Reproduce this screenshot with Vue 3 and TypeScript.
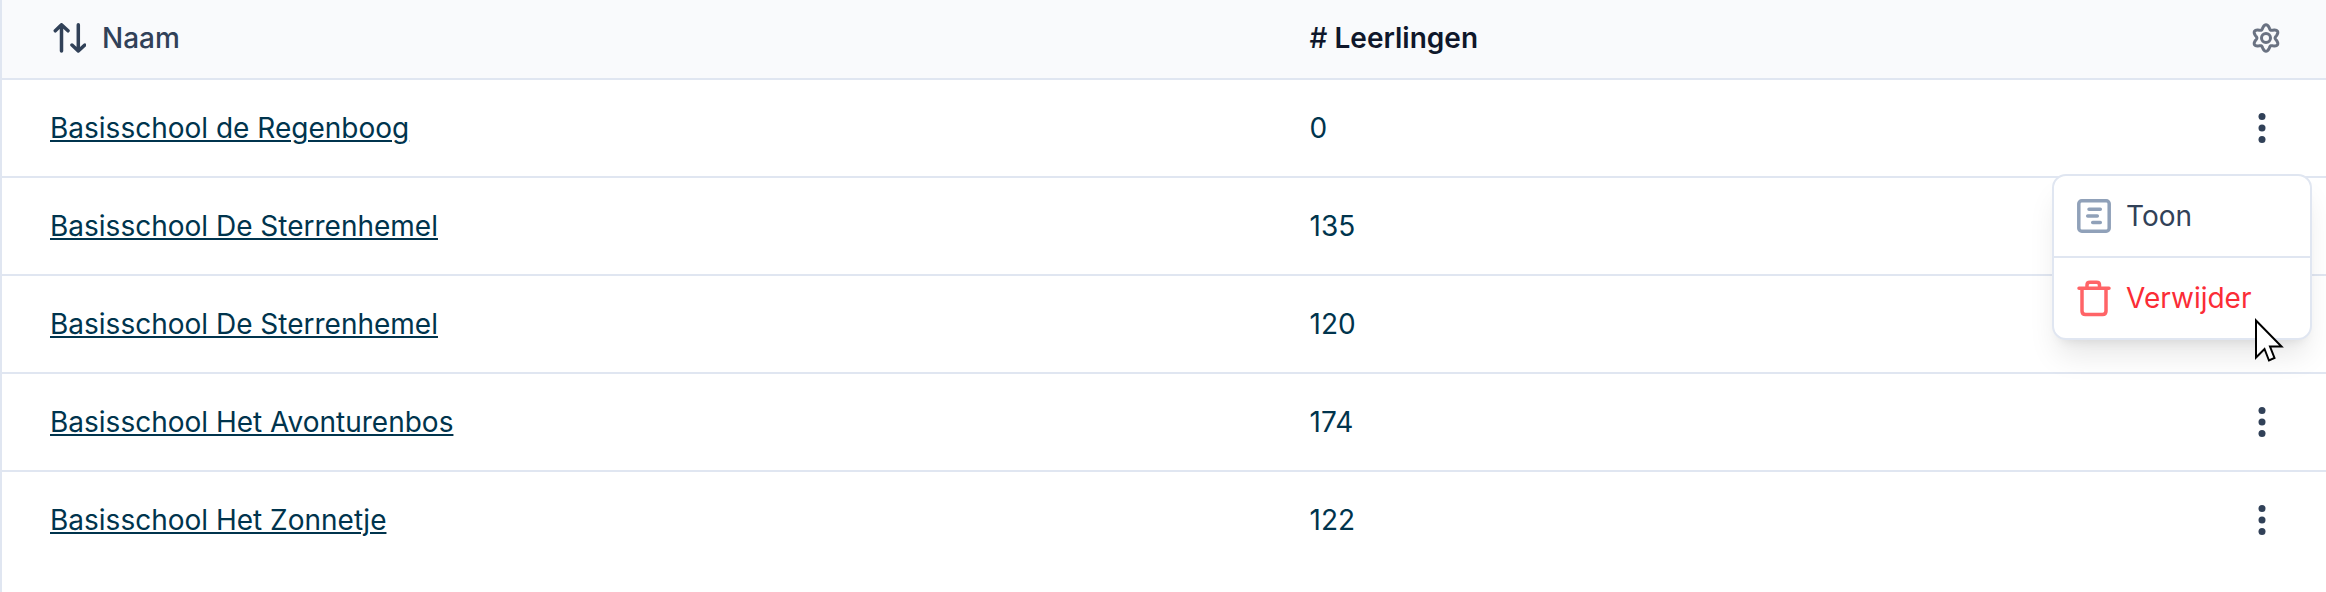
<script setup lang="ts">
import { ref } from 'vue'

interface School {
  id: number
  name: string
  pupils: number
}

const schools: School[] = [
  { id: 1, name: 'Basisschool de Regenboog', pupils: 0 },
  { id: 2, name: 'Basisschool De Sterrenhemel', pupils: 135 },
  { id: 3, name: 'Basisschool De Sterrenhemel', pupils: 120 },
  { id: 4, name: 'Basisschool Het Avonturenbos', pupils: 174 },
  { id: 5, name: 'Basisschool Het Zonnetje', pupils: 122 },
]

const openId = ref<number | null>(1)

function toggle(id: number) {
  openId.value = openId.value === id ? null : id
}

// Six-toothed gear outline around the centre of a 32 by 32 box.
const gearPath =
  'M' +
  Array.from({ length: 120 }, (_, i) => {
    const angle = (i / 120) * Math.PI * 2
    const wave = -Math.cos(6 * angle)
    const radius = 11.2 + 2.1 * wave
    return `${(16 + radius * Math.cos(angle)).toFixed(2)} ${(16 + radius * Math.sin(angle)).toFixed(2)}`
  }).join('L') +
  'Z'
</script>

<template>
  <main class="panel">
    <table class="schools">
      <thead>
        <tr>
          <th class="col-name" scope="col">
            <button class="sort" type="button">
              <svg class="sort-icon" viewBox="0 0 36 36" aria-hidden="true">
                <path d="M11.500 31V4.800M5.300 10.800L11.500 4.800L18 10.800M28.300 4.800V31M22 25L28.300 31L34.800 25" />
              </svg>
              <span>Naam</span>
            </button>
          </th>
          <th class="col-count" scope="col"><span class="hash">#</span> Leerlingen</th>
          <th class="col-actions" scope="col">
            <button class="icon-button settings" type="button" aria-label="Instellingen">
              <svg viewBox="0 0 32 32" aria-hidden="true">
                <path :d="gearPath" />
                <circle cx="16" cy="16" r="4.500" />
              </svg>
            </button>
          </th>
        </tr>
      </thead>
      <tbody>
        <tr v-for="school in schools" :key="school.id">
          <td><a class="link" href="#">{{ school.name }}</a></td>
          <td>{{ school.pupils }}</td>
          <td class="col-actions">
            <div class="actions">
              <button
                class="icon-button dots"
                type="button"
                aria-label="Acties"
                :aria-expanded="openId === school.id"
                @click="toggle(school.id)"
              >
                <svg viewBox="0 0 32 32" aria-hidden="true">
                  <circle cx="16" cy="4.500" r="3.500" />
                  <circle cx="16" cy="16" r="3.500" />
                  <circle cx="16" cy="27.500" r="3.500" />
                </svg>
              </button>
              <div v-if="openId === school.id" class="menu" role="menu">
                <button class="item" type="button" role="menuitem">
                  <svg class="item-icon" viewBox="0 0 40 40" aria-hidden="true">
                    <rect x="4.800" y="4.800" width="30.400" height="30.400" rx="3" />
                    <path d="M15 13.300H26.300M13.700 20H23.300M18.700 26.500H26.300" />
                  </svg>
                  <span>Toon</span>
                </button>
                <button class="item danger" type="button" role="menuitem">
                  <svg class="item-icon" viewBox="0 0 40 40" aria-hidden="true">
                    <path d="M5 10.300H35M13 10V7Q13 4.300 16 4.300H22.500Q25.500 4.300 25.500 7V10M8 11V33Q8 36.500 11.500 36.500H28.500Q32 36.500 32 33V11" />
                  </svg>
                  <span>Verwijder</span>
                </button>
                <svg class="cursor" viewBox="0 0 30 46" aria-hidden="true">
                  <path d="M2 3.500V40.500L10.500 32L15 43.500L20.500 41L16 29.500H27.500Z" />
                </svg>
              </div>
            </div>
          </td>
        </tr>
      </tbody>
    </table>
  </main>
</template>

<style>
body {
  margin: 0;
  background: #fff;
}
</style>

<style scoped>
.panel {
  box-sizing: border-box;
  min-height: 100vh;
  border-left: 2px solid #e0e6f1;
  font-family: Inter, sans-serif;
  font-size: 28px;
  line-height: 40px;
  color: #00344d;
}

.schools {
  width: 100%;
  table-layout: fixed;
  border-collapse: separate;
  border-spacing: 0;
}

th,
td {
  box-sizing: border-box;
  padding: 0 48px;
  text-align: left;
  border-bottom: 2px solid #e0e6f1;
}

th {
  height: 80px;
  padding-bottom: 2px;
  background: #f9fafc;
  color: #0f172b;
  font-weight: 600;
}

td {
  height: 98px;
}

tbody tr:last-child td {
  border-bottom-color: transparent;
}

.col-name {
  width: 54.2%;
}

.col-actions {
  width: 152px;
  padding: 0 44px;
}

th.col-actions {
  padding: 0 44px 2px;
}

.hash {
  font-weight: 500;
}

button {
  margin: 0;
  padding: 0;
  border: 0;
  background: none;
  font: inherit;
  color: inherit;
  cursor: pointer;
}

.sort {
  display: flex;
  align-items: center;
  gap: 16px;
  color: #314158;
  font-weight: 500;
}

.sort-icon {
  width: 36px;
  height: 36px;
  fill: none;
  stroke: currentColor;
  stroke-width: 3.5;
  stroke-linecap: round;
  stroke-linejoin: round;
}

.link {
  color: inherit;
  text-decoration: underline;
  text-decoration-thickness: 2px;
  text-underline-offset: 2px;
}

.icon-button {
  display: block;
  margin-left: auto;
}

.icon-button svg {
  display: block;
  width: 32px;
  height: 32px;
}

.settings {
  color: #6a7282;
}

.settings svg {
  fill: none;
  stroke: currentColor;
  stroke-width: 3;
}

.actions {
  position: relative;
  height: 32px;
}

.dots {
  margin-right: 4px;
  color: #314158;
  fill: currentColor;
}

.menu {
  position: absolute;
  z-index: 1;
  top: 62px;
  right: -30px;
  box-sizing: border-box;
  width: 260px;
  border: 2px solid #e0e6f1;
  border-radius: 14px;
  background: #fff;
  box-shadow:
    0 20px 30px -6px rgb(0 0 0 / 10%),
    0 8px 12px -8px rgb(0 0 0 / 10%);
}

.item {
  display: flex;
  align-items: center;
  gap: 12px;
  box-sizing: border-box;
  width: 100%;
  height: 80px;
  padding: 0 20px;
  color: #314158;
}

.item + .item {
  height: 82px;
  border-top: 2px solid #e0e6f1;
}

.item-icon {
  width: 40px;
  height: 40px;
  fill: none;
  stroke: #90a1b9;
  stroke-width: 3.5;
  stroke-linecap: round;
  stroke-linejoin: round;
}

.danger {
  color: #fb2c36;
}

.danger .item-icon {
  stroke: #ff6467;
}

.cursor {
  position: absolute;
  top: 141px;
  right: 26px;
  width: 30px;
  height: 46px;
  fill: #fff;
  stroke: #000;
  stroke-width: 2;
}
</style>
